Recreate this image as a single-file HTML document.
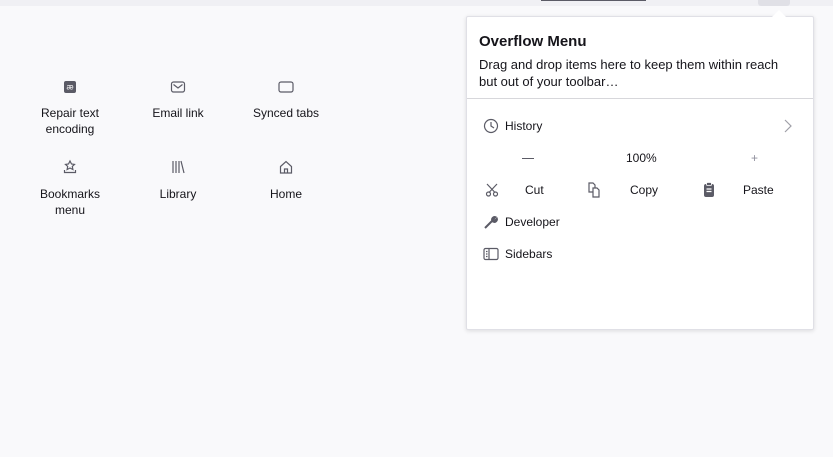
<!DOCTYPE html>
<html><head><style>
body{margin:0;width:833px;height:457px;background:#f9f9fb;font-family:"Liberation Sans",sans-serif;color:#15141a;position:relative;overflow:hidden;font-size:12px}
.top{position:absolute;left:0;top:0;width:833px;height:6px;background:#f0f0f4}
.line{position:absolute;left:541px;top:0;width:105px;height:1px;background:#5b5b66}
.btn{position:absolute;left:758px;top:0;width:32px;height:6px;background:#e0e0e6;border-radius:0 0 3px 3px}
.item{position:absolute;width:90px;text-align:center;line-height:16px}
.item svg{display:block;margin:0 auto 11px}
.panel{position:absolute;left:466px;top:16px;width:346px;height:312px;background:#fff;border:1px solid #e0e0e6;box-shadow:0 1px 4px rgba(0,0,0,.12);border-radius:2px}
.arrow{position:absolute;left:772px;top:10px;width:0;height:0;border-left:7px solid transparent;border-right:7px solid transparent;border-bottom:7px solid #fff}
.t{position:absolute;white-space:nowrap}
svg{fill:none;stroke:#5b5b66;stroke-width:1.2}
</style></head><body>
<div class="top"></div><div class="line"></div><div class="btn"></div>

<div class="item" style="left:25px;top:80px"><svg width="14" height="14" viewBox="0 0 14 14"><rect x="1" y="1" width="12" height="12" rx="2" fill="#5b5b66" stroke="none"/><text x="7" y="9.5" font-size="8" text-anchor="middle" fill="#fff" stroke="none" font-family="Liberation Sans">æ</text></svg>Repair text<br>encoding</div>
<div class="item" style="left:133px;top:80px"><svg width="16" height="14" viewBox="0 0 16 14"><rect x="1.5" y="2" width="13" height="10" rx="2"/><path d="M3.5 4.5l4.5 3.5 4.5-3.5"/></svg>Email link</div>
<div class="item" style="left:241px;top:80px"><svg width="16" height="14" viewBox="0 0 16 14"><rect x="1" y="2" width="14" height="10" rx="2"/></svg>Synced tabs</div>
<div class="item" style="left:25px;top:159px"><svg width="14" height="16" viewBox="0 0 14 16"><path d="M7 2l1.5 3 3 .4-2.2 2.1.6 3L7 9 4.1 10.5l.6-3L2.5 5.4l3-.4z"/><path d="M1.5 11v2.5h11V11"/></svg>Bookmarks<br>menu</div>
<div class="item" style="left:133px;top:159px"><svg width="14" height="16" viewBox="0 0 14 16"><path d="M2 2v12M5 2v12M8 2v12M10 2l3 12"/></svg>Library</div>
<div class="item" style="left:241px;top:159px"><svg width="16" height="16" viewBox="0 0 16 16"><path d="M2.5 7.5L8 2.5l5.5 5V14h-11z"/><path d="M6.5 14v-4h3v4"/></svg>Home</div>

<div class="panel">
<div class="t" style="left:12px;top:16px;font-size:15px;font-weight:bold">Overflow Menu</div>
<div class="t" style="left:12px;top:39px;font-size:13px;line-height:17px">Drag and drop items here to keep them within reach<br>but out of your toolbar…</div>
<div style="position:absolute;left:0;top:81px;width:346px;height:1px;background:#d7d7db"></div>
<svg style="position:absolute;left:16px;top:101px" width="16" height="16" viewBox="0 0 16 16"><circle cx="8" cy="8" r="6.5"/><path d="M8 4v4l3 2"/></svg>
<div class="t" style="left:38px;top:102px">History</div>
<svg style="position:absolute;left:316px;top:101px" width="10" height="16" viewBox="0 0 10 16"><path d="M2 2l6 6-6 6" stroke="#a0a0a8"/></svg>
<div style="position:absolute;left:55px;top:141px;width:12px;height:1px;background:#5b5b66"></div>
<div class="t" style="left:159px;top:134px">100%</div>
<div class="t" style="left:284px;top:134px;color:#8f8f9d">+</div>
<svg style="position:absolute;left:18px;top:166px" width="14" height="14" viewBox="0 0 14 14"><circle cx="3.5" cy="11" r="2"/><circle cx="10.5" cy="11" r="2"/><path d="M2 1l8 8.5M12 1l-8 8.5"/></svg>
<div class="t" style="left:58px;top:166px">Cut</div>
<svg style="position:absolute;left:120px;top:165px" width="14" height="16" viewBox="0 0 14 16"><path d="M2 1h4l2 2v7H2z"/><path d="M6 6h4l2 2v7H6z" fill="#fff"/></svg>
<div class="t" style="left:163px;top:166px">Copy</div>
<svg style="position:absolute;left:236px;top:165px" width="12" height="16" viewBox="0 0 12 16"><rect x="1" y="2" width="10" height="13" rx="2" fill="#5b5b66" stroke="none"/><rect x="3.5" y="0.5" width="5" height="3" rx="1" fill="#5b5b66" stroke="#fff" stroke-width=".8"/><path d="M3.5 7h5M3.5 9.5h5" stroke="#fff"/></svg>
<div class="t" style="left:276px;top:166px">Paste</div>
<svg style="position:absolute;left:16px;top:197px" width="16" height="16" viewBox="0 0 16 16"><path d="M2 14l7-7" stroke-width="2"/><path d="M9 7a3 3 0 0 1 4-4l-2 2 1 1 2-2a3 3 0 0 1-4 4z" fill="#5b5b66"/></svg>
<div class="t" style="left:38px;top:198px">Developer</div>
<svg style="position:absolute;left:16px;top:230px" width="16" height="14" viewBox="0 0 16 14"><rect x="1" y="1.5" width="14" height="11" rx="1.5"/><path d="M6 1.5v11M3 4.5h1.5M3 7h1.5M3 9.5h1.5"/></svg>
<div class="t" style="left:38px;top:230px">Sidebars</div>
</div>
<div class="arrow"></div>
</body></html>
